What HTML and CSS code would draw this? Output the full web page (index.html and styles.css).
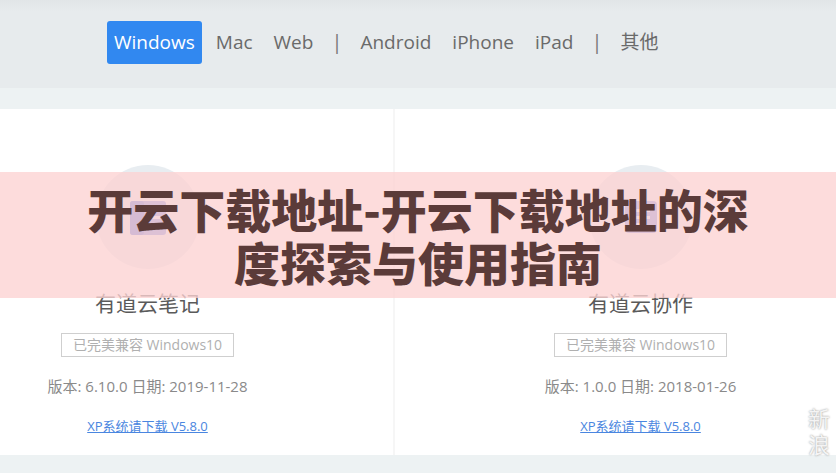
FILE: index.html
```html
<!DOCTYPE html>
<html lang="zh-CN">
<head>
    <meta charset="UTF-8">
    <meta name="viewport" content="width=device-width, initial-scale=1.0">
    <title>开云下载地址</title>
    <link rel="stylesheet" href="styles.css">
</head>
<body>
    <div class="page">
        <div class="platforms">
            <a class="tab active">Windows</a>
            <a class="tab">Mac</a>
            <a class="tab">Web</a>
            <span class="sep">|</span>
            <a class="tab">Android</a>
            <a class="tab">iPhone</a>
            <a class="tab">iPad</a>
            <span class="sep">|</span>
            <a class="tab">其他</a>
        </div>
        <div class="strip"></div>

        <div class="downloads">
            <div class="app">
                <div class="logo">
                    <svg width="44" height="44" viewBox="0 0 44 44">
                        <rect x="4" y="6" width="36" height="34" rx="3" fill="#6f86e0"/>
                        <rect x="4" y="6" width="14" height="34" rx="3" fill="#4c68d8"/>
                        <rect x="22" y="14" width="12" height="3" fill="#dfe5fb"/>
                        <rect x="22" y="21" width="12" height="3" fill="#dfe5fb"/>
                    </svg>
                </div>
                <div class="name">有道云笔记</div>
                <div class="compat">已完美兼容 Windows10</div>
                <div class="version">版本: 6.10.0 日期: 2019-11-28</div>
                <a class="xp">XP系统请下载 V5.8.0</a>
            </div>
            <div class="app">
                <div class="logo">
                    <svg width="44" height="44" viewBox="0 0 44 44">
                        <rect x="6" y="6" width="32" height="32" rx="4" fill="#6f86e0"/>
                        <rect x="13" y="14" width="18" height="3" fill="#dfe5fb"/>
                        <rect x="13" y="21" width="18" height="3" fill="#dfe5fb"/>
                        <rect x="13" y="28" width="10" height="3" fill="#dfe5fb"/>
                    </svg>
                </div>
                <div class="name">有道云协作</div>
                <div class="compat">已完美兼容 Windows10</div>
                <div class="version">版本: 1.0.0 日期: 2018-01-26</div>
                <a class="xp">XP系统请下载 V5.8.0</a>
            </div>
        </div>
        <div class="foot"></div>

        <div class="banner">
            <h1>开云下载地址-开云下载地址的深度探索与使用指南</h1>
        </div>
        <div class="mark">新<br>浪</div>
    </div>
</body>
</html>
```

FILE: styles.css
```css
body{
    margin: 0;
    font-family: "Open Sans", "Noto Sans CJK SC", sans-serif;
    background: #fff;
    overflow: hidden;
}
.page{
    position: relative;
    width: 836px;
    height: 473px;
    overflow: hidden;
}

/* platform switcher */
.platforms{
    height: 88px;
    box-sizing: border-box;
    padding-bottom: 4px;
    display: flex;
    align-items: center;
    gap: 21px;
    padding-left: 107px;
    background: linear-gradient(#e1e5e7, #e7ebed 12px, #e7ebed);
    font-size: 19px;
    color: #6a6a6a;
}
.tab{
    line-height: 43px;
}
.tab.active{
    background: #3188f0;
    color: #fff;
    padding: 0 7px;
    border-radius: 3px;
    margin-right: -7px;
    font-size: 19px;
}
.sep{
    color: #777;
    font-size: 20px;
    margin: -2px -3px 0;
}
.strip{
    height: 21px;
    background: #edf2f3;
}

/* download cards */
.downloads{
    display: flex;
    margin-left: -98px;
    height: 346px;
    background: #fff;
}
.app{
    width: 493px;
    flex: none;
    display: flex;
    flex-direction: column;
    align-items: center;
    padding-top: 56px;
    box-sizing: border-box;
    border-right: 2px solid #f6f6f6;
}
.logo{
    width: 104px;
    height: 104px;
    border-radius: 50%;
    background: #e8edf1;
    display: flex;
    align-items: center;
    justify-content: center;
}
.name{
    margin-top: 20px;
    font-size: 21px;
    color: #5a5a5a;
    line-height: 28px;
}
.compat{
    margin-top: 16px;
    border: 1px solid #cfcfcf;
    width: 171px;
    height: 22px;
    line-height: 22px;
    text-align: center;
    font-size: 14px;
    color: #b0b0b0;
}
.version{
    margin-top: 18px;
    font-size: 15px;
    color: #8a8a8a;
}
.xp{
    margin-top: 20px;
    font-size: 13px;
    color: #4a86e0;
    text-decoration: underline;
}
.foot{
    height: 18px;
    background: #edf2f3;
}

/* title overlay */
.banner{
    position: absolute;
    left: 0;
    top: 172px;
    width: 100%;
    height: 126px;
    background: rgba(252, 210, 210, 0.78);
    display: flex;
    align-items: center;
    justify-content: center;
}
.banner h1{
    margin: 0;
    width: 680px;
    text-align: center;
    font-family: "Noto Sans CJK SC", sans-serif;
    font-weight: 900;
    font-size: 46px;
    line-height: 53px;
    color: #5b3b39;
}
.mark{
    position: absolute;
    right: 6px;
    top: 404px;
    font-family: "Noto Sans CJK SC", sans-serif;
    font-size: 22px;
    line-height: 26px;
    color: #f4f4f4;
    text-shadow: 0 0 2px #8a8a8a;
}
```
